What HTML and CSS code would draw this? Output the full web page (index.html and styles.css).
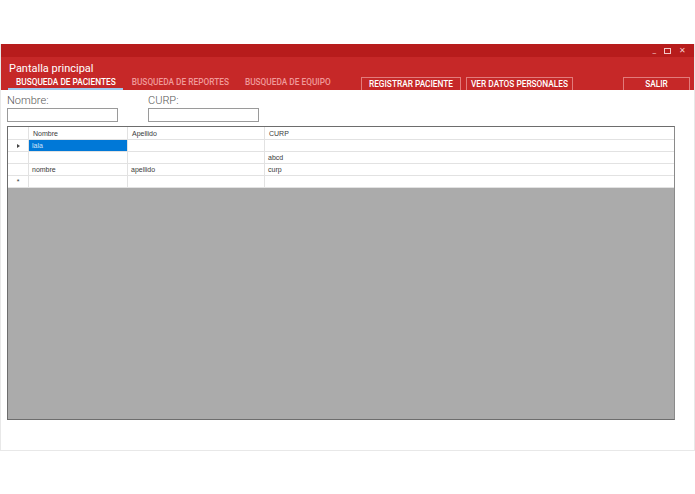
FILE: index.html
```html
<!DOCTYPE html>
<html lang="es">
<head>
  <meta charset="UTF-8">
  <title>Pantalla principal</title>
  <link rel="stylesheet" href="styles.css">
</head>
<body>
  <div class="window">
    <div class="titlebar">
      <span class="ctrl">_</span>
      <span class="ctrl box"></span>
      <span class="ctrl">&#x2715;</span>
    </div>
    <div class="header">
      <div class="title">Pantalla principal</div>
      <div class="nav">
        <div class="tabs">
          <span class="tab active">BUSQUEDA DE PACIENTES</span>
          <span class="tab">BUSQUEDA DE REPORTES</span>
          <span class="tab">BUSQUEDA DE EQUIPO</span>
        </div>
        <div class="actions">
          <button class="btn btn-reg">REGISTRAR PACIENTE</button>
          <button class="btn btn-ver">VER DATOS PERSONALES</button>
          <button class="btn btn-salir">SALIR</button>
        </div>
      </div>
    </div>

    <div class="content">
      <div class="filters">
        <div class="field">
          <label>Nombre:</label>
          <input type="text">
        </div>
        <div class="field">
          <label>CURP:</label>
          <input type="text">
        </div>
      </div>

      <div class="grid">
        <table>
          <tr class="head">
            <td class="rh"></td><td class="c1">Nombre</td><td class="c2">Apellido</td><td>CURP</td>
          </tr>
          <tr>
            <td class="rh"><span class="arrow"></span></td><td class="sel">lala</td><td></td><td></td>
          </tr>
          <tr>
            <td class="rh"></td><td></td><td></td><td>abcd</td>
          </tr>
          <tr>
            <td class="rh"></td><td>nombre</td><td>apellido</td><td>curp</td>
          </tr>
          <tr>
            <td class="rh">*</td><td></td><td></td><td></td>
          </tr>
        </table>
      </div>
    </div>
  </div>
</body>
</html>
```

FILE: styles.css
```css
body {
  margin: 0;
  background: #fff;
  font-family: Roboto, "Liberation Sans", sans-serif;
}
.window {
  margin-top: 44px;
  height: 406px;
  border: 1px solid #e8e8e8;
  border-top: none;
  display: flex;
  flex-direction: column;
}
.titlebar {
  background: #b71c1c;
  height: 13px;
  display: flex;
  justify-content: flex-end;
  align-items: center;
  gap: 8px;
  padding-right: 8px;
  color: #f3c9c9;
  font-size: 8px;
}
.ctrl {
  line-height: 8px;
}
.ctrl.box {
  width: 5px;
  height: 4px;
  border: 1px solid #f3c9c9;
}
.header {
  background: #c62828;
  height: 33px;
  display: flex;
  flex-direction: column;
}
.title {
  color: #fff;
  font-size: 11px;
  padding: 5px 0 0 8px;
  height: 14px;
}
.nav {
  display: flex;
  align-items: flex-end;
  flex: 1;
}
.tabs {
  display: flex;
  flex: none;
  padding-left: 7px;
  box-sizing: border-box;
  width: 360px;
}
.tab {
  font-size: 8.3px;
  font-weight: 500;
  color: #f09a9a;
  padding: 0 7px 0 8px;
  height: 14px;
  line-height: 12px;
  box-sizing: border-box;
  white-space: nowrap;
}
.tab + .tab {
  margin-left: 1px;
}
.tab.active {
  color: #fff;
  border-bottom: 2px solid #9cc9ee;
}
.actions {
  display: flex;
}
.btn {
  font-family: Roboto, "Liberation Sans", sans-serif;
  font-size: 8.3px;
  font-weight: 500;
  color: #fff;
  background: transparent;
  border: 1px solid #e27b7b;
  border-bottom: none;
  height: 13px;
  padding: 0;
  line-height: 11px;
  white-space: nowrap;
}
.btn-reg { width: 100px; }
.btn-ver { width: 107px; margin-left: 5px; }
.btn-salir { width: 67px; margin-left: 50px; }
.content {
  flex: 1;
  padding: 4px 0 0 6px;
}
.filters {
  display: flex;
  gap: 30px;
}
.field {
  display: flex;
  flex-direction: column;
}
.field label {
  font-size: 11px;
  color: #555;
  font-weight: 300;
  height: 14px;
}
.field input {
  width: 107px;
  height: 10px;
  border: 1px solid #9a9a9a;
  padding: 1px;
  margin: 0;
}
.grid {
  margin-top: 4px;
  width: 666px;
  height: 292px;
  background: #ababab;
  border: 1px solid #6d6d6d;
  border-right-color: #8a8a8a;
}
table {
  border-collapse: collapse;
  width: 100%;
  font-family: "Liberation Sans", sans-serif;
  font-size: 7px;
  color: #3a3a3a;
}
td {
  background: #fff;
  height: 11px;
  padding: 0 0 0 3px;
  border: 1px solid #e2e2e2;
  border-top: none;
  border-left: none;
}
td:last-child {
  border-right: none;
}
.head td {
  height: 12px;
  padding-left: 4px;
}
.rh {
  width: 16px;
  text-align: center;
  padding: 0;
}
.c1 { width: 94px; }
.c2 { width: 132px; }
td.sel {
  background: #0078d7;
  color: #cfe4f7;
}
.arrow {
  display: inline-block;
  border-left: 3px solid #444;
  border-top: 2.5px solid transparent;
  border-bottom: 2.5px solid transparent;
  vertical-align: middle;
}
```
